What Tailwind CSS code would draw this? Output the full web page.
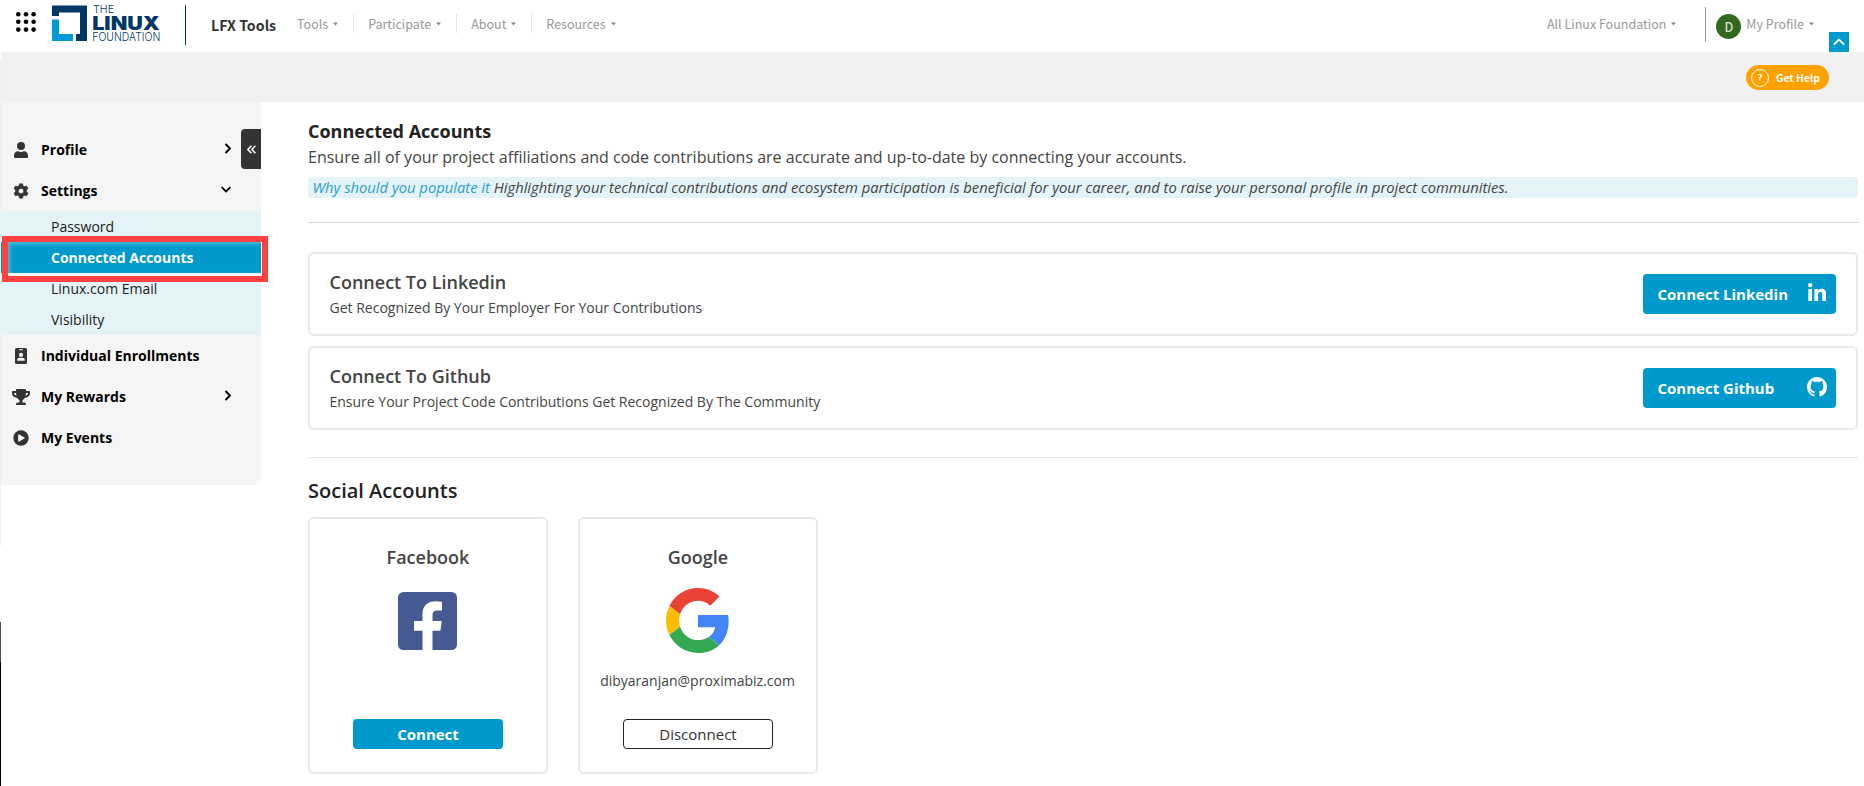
<!DOCTYPE html>
<html lang="en">
<head>
<meta charset="utf-8">
<title>Connected Accounts</title>
<script src="https://cdn.jsdelivr.net/npm/@tailwindcss/browser@4"></script>
</head>
<body class="relative h-[786px] overflow-hidden bg-white font-['Open_Sans',sans-serif] text-[14px] text-[#444]">

<!-- Top navigation -->
<header class="relative flex h-[52px] font-['Noto_Sans_CJK_SC',sans-serif] text-[12.5px] text-[#999]">
  <svg class="ml-4 mt-3 h-5 w-5 shrink-0" viewBox="0 0 20 20" fill="#000"><circle cx="2.3" cy="2.3" r="2.3"/><circle cx="10" cy="2.3" r="2.3"/><circle cx="17.6" cy="2.3" r="2.3"/><circle cx="2.3" cy="9.8" r="2.3"/><circle cx="10" cy="9.8" r="2.3"/><circle cx="17.6" cy="9.8" r="2.3"/><circle cx="2.3" cy="17.6" r="2.3"/><circle cx="10" cy="17.6" r="2.3"/><circle cx="17.6" cy="17.6" r="2.3"/></svg>
  <svg class="ml-[15px] h-[46px] w-[114px] shrink-0" viewBox="51 0 114 46">
    <path fill="#003764" d="M52 5.5H87V41H76V34H80V12.5H59V16H52Z"/>
    <path fill="#0099d9" d="M52 19.500H59V34H73V41H52Z"/>
    <g fill="#003764" font-family="Inter, sans-serif">
      <text x="93" y="13.400" font-size="10.500" font-weight="300" textLength="21" lengthAdjust="spacingAndGlyphs">THE</text>
      <text x="92.200" y="29.600" font-size="18.400" font-weight="900" textLength="67.500" lengthAdjust="spacingAndGlyphs">LINUX</text>
      <text x="92.300" y="40.700" font-size="11" font-weight="300" textLength="68" lengthAdjust="spacingAndGlyphs">FOUNDATION</text>
    </g>
  </svg>
  <div class="ml-5 mt-[5px] h-10 w-px shrink-0 bg-[#003764]"></div>
  <div class="ml-[25px] mt-[15px] w-[86px] whitespace-nowrap text-[14.200px] font-bold leading-5 text-[#333]">LFX Tools</div>
  <nav class="mt-[14px] flex h-[19px] leading-[19px] whitespace-nowrap">
    <div class="flex items-center gap-[5px] border-r border-[#e5e5e5] pr-[15px]">Tools<svg class="h-1 w-[5px]" viewBox="0 0 5 4" fill="#888"><path d="M0 .5H5L2.500 3.500Z"/></svg></div>
    <div class="flex items-center gap-[5px] border-r border-[#e5e5e5] pl-[14px] pr-[15px]">Participate<svg class="h-1 w-[5px]" viewBox="0 0 5 4" fill="#888"><path d="M0 .5H5L2.500 3.500Z"/></svg></div>
    <div class="flex items-center gap-[5px] border-r border-[#e5e5e5] pl-[14px] pr-[15px]">About<svg class="h-1 w-[5px]" viewBox="0 0 5 4" fill="#888"><path d="M0 .5H5L2.500 3.500Z"/></svg></div>
    <div class="flex items-center gap-[5px] pl-[14px]">Resources<svg class="h-1 w-[5px]" viewBox="0 0 5 4" fill="#888"><path d="M0 .5H5L2.500 3.500Z"/></svg></div>
  </nav>
  <div class="ml-auto mr-[50px] flex whitespace-nowrap leading-[19px]">
    <div class="mr-[29px] mt-[14px] flex h-[19px] items-center gap-[5px]">All Linux Foundation<svg class="h-1 w-[5px]" viewBox="0 0 5 4" fill="#888"><path d="M0 .5H5L2.500 3.500Z"/></svg></div>
    <div class="mt-[7px] h-[35px] w-px bg-[#999]"></div>
    <div class="ml-[10px] mt-[14px] flex h-[25px] w-[25px] items-center justify-center rounded-full bg-[#33691e] text-[12.500px] font-medium text-[#d5dfd0]">D</div>
    <div class="ml-[5px] mt-[14px] flex h-[19px] items-center gap-[5px]">My Profile<svg class="h-1 w-[5px]" viewBox="0 0 5 4" fill="#888"><path d="M0 .5H5L2.500 3.500Z"/></svg></div>
  </div>
  <div class="absolute bottom-0 right-[15px] flex h-5 w-5 items-center justify-center bg-[#0099cc]">
    <svg class="h-2 w-3" viewBox="0 0 12 8" fill="none" stroke="#fff" stroke-width="1.800"><path d="M.8 6.700 6 1.500 11.200 6.700"/></svg>
  </div>
</header>

<!-- Help strip -->
<div class="ml-px flex h-[50px] items-start justify-end bg-[#f1f1f1] pr-[35px] pt-[13px]">
  <div class="flex h-[25px] w-[83px] items-center gap-[7px] whitespace-nowrap rounded-full bg-[#ffa200] pl-[5px] font-['Noto_Sans_CJK_SC',sans-serif] text-[10.400px] font-bold text-white">
    <span class="flex h-[18px] w-[18px] shrink-0 items-center justify-center rounded-full border border-white text-[9.500px] leading-none">?</span>Get Help
  </div>
</div>

<div class="flex items-start">
  <!-- Sidebar -->
  <aside class="relative ml-px h-[383px] w-[260px] shrink-0 rounded-br-[8px] bg-[#f5f5f5] pt-[27px] font-bold text-black">
    <button class="absolute right-0 top-[27px] flex h-10 w-5 items-center justify-center rounded-l bg-[#333]">
      <svg class="h-[9px] w-[9px]" viewBox="0 0 9 9" fill="none" stroke="#fff" stroke-width="1.500"><path d="M4.400.7.900 4.500 4.400 8.300M8.400.7 4.900 4.500 8.400 8.300"/></svg>
    </button>
    <div class="flex h-[41px] items-center pl-[11px]">
      <svg class="h-4 w-[18px]" viewBox="0 0 18 16" fill="#333"><circle cx="9" cy="4" r="4"/><path d="M2 16V13.500C2 11 3.800 9.300 6 9.300Q9 10.500 12 9.300C14.200 9.300 16 11 16 13.500V14.800Q16 16 14.800 16H3.200Q2 16 2 14.800Z"/></svg>
      <span class="ml-[11px] w-[183px]">Profile</span>
      <svg class="mb-[3px] h-[11px] w-[8px]" viewBox="0 0 8 11" fill="none" stroke="#000" stroke-width="1.900"><path d="M1.500 1 6 5.500 1.500 10"/></svg>
    </div>
    <div class="flex h-[41px] items-center pl-[11px]">
      <svg class="h-4 w-[18px]" viewBox="-1 0 18 16" fill="#333"><path fill-rule="evenodd" d="M6.500.3h3l.5 2 1.500.8 2-.7 1.500 2.600-1.500 1.500v1.800l1.500 1.500-1.500 2.600-2-.7-1.500.9-.5 2.100h-3l-.5-2.100-1.500-.9-2 .7L1 9.800l1.500-1.500V6.500L1 5l1.500-2.600 2 .7L6 2.300ZM8 4.900A2.600 2.600 0 1 0 8 10.100 2.600 2.600 0 1 0 8 4.900Z" transform="translate(0 .5)" stroke="#333" stroke-width=".6" stroke-linejoin="round"/></svg>
      <span class="ml-[11px] w-[180px]">Settings</span>
      <svg class="mb-[3px] h-[7px] w-[10px]" viewBox="0 0 10 7" fill="none" stroke="#000" stroke-width="1.800"><path d="M.7 1.200 5 5.500 9.300 1.200"/></svg>
    </div>
    <ul class="bg-[#e4f3f8] font-normal leading-[31px] text-[#1b1b1b]">
      <li class="pl-[50px]">Password</li>
      <li class="bg-[#0099cc] pl-[50px] font-bold text-white">Connected Accounts</li>
      <li class="pl-[50px]">Linux.com Email</li>
      <li class="pl-[50px]">Visibility</li>
    </ul>
    <div class="flex h-[41px] items-center pl-[11px]">
      <svg class="h-4 w-[18px]" viewBox="0 0 18 16"><rect x="3" width="12" height="16" rx="1.600" fill="#333"/><path fill="#f5f5f5" d="M7 1.200H11V2.200H7ZM5.200 12.800V12C5.200 10.500 6.300 9.700 7.400 9.700H10.600C11.700 9.700 12.800 10.500 12.800 12V12.800Z"/><circle cx="9" cy="6.900" r="2.100" fill="#f5f5f5"/></svg>
      <span class="ml-[11px]">Individual Enrollments</span>
    </div>
    <div class="flex h-[41px] items-center pl-[11px]">
      <svg class="h-4 w-[18px]" viewBox="0 0 576 512" fill="#333"><path d="M552 64H448V24c0-13.300-10.700-24-24-24H152c-13.300 0-24 10.700-24 24v40H24C10.700 64 0 74.700 0 88v56c0 35.700 22.500 72.400 61.900 100.700 31.500 22.700 69.800 37.100 110 41.700C203.300 338.500 240 360 240 360v72h-48c-35.300 0-64 20.700-64 56v12c0 6.600 5.400 12 12 12h296c6.600 0 12-5.400 12-12v-12c0-35.300-28.700-56-64-56h-48v-72s36.700-21.500 68.100-73.600c40.300-4.600 78.600-19 110-41.700 39.300-28.300 61.900-65 61.900-100.700V88c0-13.300-10.700-24-24-24zM99.300 192.800C74.900 175.200 64 155.600 64 144v-16h64.200c1 32.600 5.800 61.200 12.800 86.200-15.100-5.200-29.200-12.400-41.700-21.400zM512 144c0 16.100-17.700 36.100-35.300 48.800-12.500 9-26.700 16.200-41.800 21.400 7-25 11.800-53.600 12.800-86.200H512v16z"/></svg>
      <span class="ml-[11px] w-[183px]">My Rewards</span>
      <svg class="mb-[3px] h-[11px] w-[8px]" viewBox="0 0 8 11" fill="none" stroke="#000" stroke-width="1.900"><path d="M1.500 1 6 5.500 1.500 10"/></svg>
    </div>
    <div class="flex h-[41px] items-center pl-[11px]">
      <svg class="h-4 w-[18px]" viewBox="0 0 18 16"><circle cx="9" cy="8" r="7.700" fill="#333"/><path d="M6.700 4.700V11.300L12.400 8Z" fill="#f5f5f5" stroke="#f5f5f5" stroke-linejoin="round"/></svg>
      <span class="ml-[11px]">My Events</span>
    </div>
  </aside>

  <!-- Main content -->
  <main class="ml-[47px] w-[1550px] pt-4">
    <h1 class="h-[26px] text-[18px] font-bold leading-[26px] text-[#222]">Connected Accounts</h1>
    <p class="h-[26px] whitespace-nowrap text-[16px] leading-[27px]">Ensure all of your project affiliations and code contributions are accurate and up-to-date by connecting your accounts.</p>
    <p class="mt-[7px] h-[21px] whitespace-nowrap rounded bg-[#e4f3f8] pl-[4.500px] text-[14.760px] italic leading-[21px]"><span class="text-[#2b9fce]">Why should you populate it</span> Highlighting your technical contributions and ecosystem participation is beneficial for your career, and to raise your personal profile in project communities.</p>
    <hr class="mt-6 border-[#d8d8d8]">

    <section class="mt-[29px] flex h-[84px] items-center justify-between rounded-[6px] border-2 border-[#e8e8e8] pl-[19.500px] pr-5">
      <div>
        <h2 class="pt-px text-[18px] font-semibold leading-[27px]">Connect To Linkedin</h2>
        <p class="leading-6">Get Recognized By Your Employer For Your Contributions</p>
      </div>
      <button class="flex h-10 w-[193px] items-center justify-between rounded bg-[#0099cc] pl-[14.500px] pr-[10px] text-[15px] font-bold text-white">Connect Linkedin
        <svg class="mb-[5px] h-[18px] w-[18px]" viewBox="0 0 448 448" fill="#fff"><path d="M100.300 448H7.400V148.900h92.900zM53.800 108.100C24.100 108.100 0 83.500 0 53.800a53.800 53.800 0 0 1 107.600 0c0 29.700-24.100 54.300-53.800 54.300zM447.900 448h-92.700V302.400c0-34.700-.7-79.200-48.300-79.200-48.300 0-55.700 37.700-55.700 76.700V448h-92.800V148.900h89.100v40.800h1.300c12.400-23.500 42.700-48.300 87.900-48.300 94 0 111.300 61.900 111.300 142.300V448z"/></svg>
      </button>
    </section>
    <section class="mt-[10px] flex h-[84px] items-center justify-between rounded-[6px] border-2 border-[#e8e8e8] pl-[19.500px] pr-5">
      <div>
        <h2 class="pt-px text-[18px] font-semibold leading-[27px]">Connect To Github</h2>
        <p class="leading-6">Ensure Your Project Code Contributions Get Recognized By The Community</p>
      </div>
      <button class="flex h-10 w-[193px] items-center justify-between rounded bg-[#0099cc] pl-[14.500px] pr-[9px] text-[15px] font-bold text-white">Connect Github
        <svg class="mb-[2px] h-5 w-5" viewBox="0 0 16 16" fill="#fff"><path d="M8 0C3.580 0 0 3.580 0 8c0 3.540 2.290 6.530 5.470 7.590.4.070.55-.17.55-.38 0-.19-.01-.82-.01-1.490-2.010.37-2.530-.49-2.690-.94-.09-.23-.48-.94-.82-1.130-.28-.15-.68-.52-.01-.53.63-.01 1.080.58 1.230.82.72 1.210 1.870.87 2.330.66.07-.52.28-.87.51-1.070-1.780-.2-3.640-.89-3.640-3.950 0-.87.310-1.590.82-2.150-.08-.2-.36-1.020.08-2.120 0 0 .67-.21 2.200.82.640-.18 1.320-.27 2-.27s1.360.09 2 .27c1.530-1.040 2.200-.82 2.200-.82.440 1.100.160 1.920.080 2.120.510.56.820 1.270.820 2.150 0 3.070-1.870 3.750-3.650 3.950.29.25.54.73.54 1.480 0 1.070-.01 1.930-.01 2.200 0 .21.15.46.55.38A8.010 8.010 0 0 0 16 8c0-4.420-3.580-8-8-8z"/></svg>
      </button>
    </section>
    <hr class="mt-[27px] border-[#e5e5e5]">

    <h2 class="mt-[19px] h-[40px] text-[20px] font-semibold leading-[28px] text-[#222]">Social Accounts</h2>
    <div class="flex gap-[30px]">
      <section class="flex h-[257px] w-[240px] flex-col items-center rounded-[6px] border-2 border-[#e8e8e8] pt-6">
        <h3 class="text-[18px] font-semibold leading-[28px]">Facebook</h3>
        <svg class="mr-px mt-[21px] h-[58px] w-[59px]" viewBox="0 0 59 58"><rect width="59" height="58" rx="5.500" fill="#475993"/><path fill="#fff" d="M24.500 58V38.700H16V29H24.500V22C24.500 14 29.500 9.300 37.500 9.300Q41.500 9.300 44 9.700V18.500H39.500C35.500 18.500 34.500 20.500 34.500 23.500V29H43.700L42.400 38.700H34.500V58Z"/></svg>
        <button class="mt-[69px] h-[30px] w-[150px] rounded bg-[#0099cc] text-[15px] font-bold leading-[30px] text-white">Connect</button>
      </section>
      <section class="flex h-[257px] w-[240px] flex-col items-center rounded-[6px] border-2 border-[#e8e8e8] pt-6">
        <h3 class="text-[18px] font-semibold leading-[28px]">Google</h3>
        <svg class="mt-[17px] h-[65px] w-[64px]" viewBox="0 0 48 48" preserveAspectRatio="none"><path fill="#EA4335" d="M24 9.500c3.540 0 6.710 1.220 9.210 3.600l6.850-6.850C35.900 2.380 30.470 0 24 0 14.620 0 6.510 5.380 2.560 13.220l7.980 6.190C12.430 13.720 17.740 9.500 24 9.500z"/><path fill="#4285F4" d="M46.980 24.550c0-1.570-.15-3.090-.38-4.550H24v9.020h12.940c-.58 2.960-2.260 5.480-4.780 7.180l7.730 6c4.510-4.180 7.090-10.360 7.090-17.650z"/><path fill="#FBBC05" d="M10.530 28.590c-.48-1.450-.76-2.990-.76-4.590s.27-3.140.76-4.590l-7.980-6.190C.92 16.460 0 20.120 0 24c0 3.880.92 7.540 2.560 10.780l7.970-6.190z"/><path fill="#34A853" d="M24 48c6.480 0 11.930-2.130 15.890-5.810l-7.730-6c-2.150 1.450-4.920 2.300-8.160 2.300-6.260 0-11.570-4.220-13.470-9.910l-7.980 6.190C6.510 42.620 14.620 48 24 48z"/></svg>
        <p class="mr-px mt-[17px] leading-[22px]">dibyaranjan@proximabiz.com</p>
        <button class="mt-[27px] h-[30px] w-[150px] rounded border border-[#222] text-[15px] leading-[28px] text-[#333]">Disconnect</button>
      </section>
    </div>
  </main>
</div>

<!-- Highlight frame laid over the active menu entry -->
<div class="absolute left-[2px] top-[236px] h-[46px] w-[266px] border-[6px] border-[#ff4141]">
  <div class="h-full w-full border-b-[3px] border-white/60"><div class="h-full shadow-[inset_2px_2px_4px_rgba(255,255,255,0.35)]"></div></div>
</div>

<!-- Window edge on the far left -->
<div class="absolute left-0 top-[60px] flex h-[726px] w-px flex-col"><div class="h-[486px] bg-[#f0f0f0]"></div><div class="mt-[76px] h-10 bg-[#4d4d4d]"></div><div class="grow bg-black"></div></div>
</body>
</html>
